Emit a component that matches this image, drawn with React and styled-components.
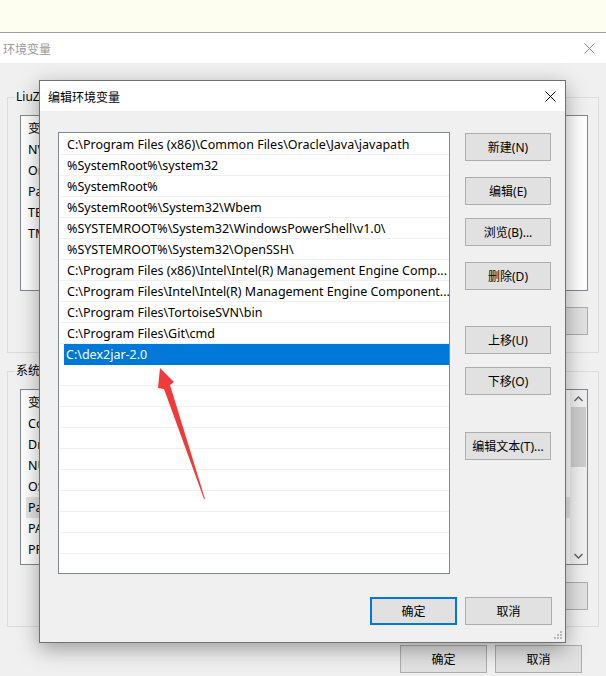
import styled, { createGlobalStyle } from "styled-components";

const GlobalStyle = createGlobalStyle`
  body {
    margin: 0;
    background: #f0f0f0;
    font-family: "Noto Sans", "Noto Sans CJK SC", sans-serif;
  }
`;

const Page = styled.div`
  position: relative;
  width: 606px;
  height: 676px;
  overflow: hidden;
  background: #f0f0f0;
`;

const TopStrip = styled.div`
  height: 32px;
  background: #fdfdf0;
  border-bottom: 1px solid #9d9d9d;
`;

const Window = styled.div`
  display: flex;
  flex-direction: column;
`;

const TitleBar = styled.div`
  height: 30px;
  display: flex;
  align-items: center;
  justify-content: space-between;
  background: #ffffff;
  padding: 0 11px 0 3px;
  font-size: 12px;
  color: ${(p) => (p.$active ? "#000000" : "#9a9a9a")};
  font-family: "Noto Sans CJK SC", sans-serif;
`;

const CloseIcon = ({ color }) => (
  <svg width="11" height="11" viewBox="0 0 11 11">
    <path d="M0.5 0.5 L10.5 10.5 M10.5 0.5 L0.5 10.5" stroke={color} strokeWidth="1" fill="none" />
  </svg>
);

const Body = styled.div`
  display: flex;
  flex-direction: column;
  padding: 0 7px 0 7px;
`;

const Group = styled.fieldset`
  margin: ${(p) => p.$top}px 0 0 0;
  padding: ${(p) => p.$padTop}px 10px ${(p) => p.$padBottom}px 12px;
  border: 1px solid #dcdcdc;
  display: flex;
  flex-direction: column;
  align-items: flex-end;
`;

const Legend = styled.legend`
  padding: 0 1px;
  margin-left: -5px;
  font-size: 12px;
  line-height: 16px;
  color: #000;
  font-family: "Noto Sans", "Noto Sans CJK SC", sans-serif;
`;

const VarList = styled.div`
  align-self: stretch;
  height: 176px;
  box-sizing: border-box;
  border: 1px solid #828790;
  background: #ffffff;
  display: flex;
  overflow: hidden;
`;

const VarRows = styled.div`
  flex: 1;
  padding-top: 2px;
  overflow: hidden;
`;

const VarRow = styled.div`
  height: 21px;
  line-height: 21px;
  font-size: 12.5px;
  padding-left: ${(p) => (p.$hover ? 2 : 7)}px;
  margin-left: ${(p) => (p.$hover ? 5 : 0)}px;
  background: ${(p) => (p.$hover ? "#e5e5e5" : "transparent")};
  white-space: nowrap;
`;

const ScrollBar = styled.div`
  width: 17px;
  background: #f0f0f0;
  display: flex;
  flex-direction: column;
`;

const ScrollArrow = styled.div`
  height: 17px;
  display: flex;
  align-items: center;
  justify-content: center;
`;

const ScrollThumb = styled.div`
  height: 60px;
  margin: 0 1px;
  background: #cdcdcd;
`;

const ScrollTrack = styled.div`
  flex: 1;
`;

const Chevron = ({ up }) => (
  <svg width="9" height="6" viewBox="0 0 9 6">
    <path
      d={up ? "M0.5 5 L4.5 1 L8.5 5" : "M0.5 1 L4.5 5 L8.5 1"}
      stroke="#606060"
      strokeWidth="1.4"
      fill="none"
    />
  </svg>
);

const Button = styled.button`
  width: ${(p) => p.$width || 86}px;
  height: 28px;
  margin-top: ${(p) => p.$top || 0}px;
  box-sizing: border-box;
  background: #e1e1e1;
  border: ${(p) => (p.$default ? "2px solid #0078d7" : "1px solid #adadad")};
  font-size: 12px;
  font-family: "Noto Sans", "Noto Sans CJK SC", sans-serif;
  color: #000;
  padding: 0;
  flex-shrink: 0;
`;

const Footer = styled.div`
  display: flex;
  justify-content: flex-end;
  gap: ${(p) => p.$gap}px;
  margin-top: ${(p) => p.$top}px;
  padding-right: ${(p) => p.$right}px;
`;

const Dialog = styled.div`
  position: absolute;
  left: 39px;
  top: 80px;
  width: 527px;
  height: 563px;
  box-sizing: border-box;
  border: 1px solid #707070;
  background: #f0f0f0;
  box-shadow: 0 6px 20px rgba(0, 0, 0, 0.35);
  display: flex;
  flex-direction: column;
`;

const DialogTitle = styled(TitleBar)`
  padding: 0 9px 0 8px;
`;

const DialogBody = styled.div`
  padding: 21px 0 0 18px;
  display: flex;
  flex-direction: column;
`;

const DialogRow = styled.div`
  display: flex;
  gap: 15px;
`;

const PathList = styled.div`
  width: 392px;
  height: 442px;
  box-sizing: border-box;
  border: 1px solid #828790;
  background: #ffffff;
  padding-top: 1px;
  overflow: hidden;
`;

const PathRow = styled.div`
  height: 21px;
  box-sizing: border-box;
  line-height: 21px;
  font-size: 12.5px;
  padding-left: ${(p) => (p.$selected ? 2 : 7)}px;
  margin-left: ${(p) => (p.$selected ? 5 : 1)}px;
  color: ${(p) => (p.$selected ? "#ffffff" : "#000000")};
  background: ${(p) => (p.$selected ? "#0078d7" : "transparent")};
  border-bottom: 1px solid ${(p) => (p.$selected ? "#0078d7" : "#f0f0f0")};
  white-space: nowrap;
  overflow: hidden;
`;

const ButtonColumn = styled.div`
  display: flex;
  flex-direction: column;
  padding-top: 1px;
`;

const Grip = styled.svg`
  position: absolute;
  right: 2px;
  bottom: 2px;
`;

const Arrow = styled.svg`
  position: absolute;
  left: 145px;
  top: 360px;
  pointer-events: none;
`;

const paths = [
  "C:\\Program Files (x86)\\Common Files\\Oracle\\Java\\javapath",
  "%SystemRoot%\\system32",
  "%SystemRoot%",
  "%SystemRoot%\\System32\\Wbem",
  "%SYSTEMROOT%\\System32\\WindowsPowerShell\\v1.0\\",
  "%SYSTEMROOT%\\System32\\OpenSSH\\",
  "C:\\Program Files (x86)\\Intel\\Intel(R) Management Engine Comp...",
  "C:\\Program Files\\Intel\\Intel(R) Management Engine Component...",
  "C:\\Program Files\\TortoiseSVN\\bin",
  "C:\\Program Files\\Git\\cmd",
  "C:\\dex2jar-2.0",
];

const userVars = ["变量", "NVM_HOME", "OneDrive", "Path", "TEMP", "TMP"];
const sysVars = ["变量", "ComSpec", "DriverData", "NUMBER_OF_PROCESSORS", "OS", "Path", "PATHEXT", "PROCESSOR_ARCHITECTURE"];

const sideButtons = [
  { label: "新建(N)", top: 0 },
  { label: "编辑(E)", top: 16 },
  { label: "浏览(B)...", top: 13 },
  { label: "删除(D)", top: 16 },
  { label: "上移(U)", top: 36 },
  { label: "下移(O)", top: 13 },
  { label: "编辑文本(T)...", top: 37 },
];

export default function App() {
  const empty = Array.from({ length: 10 });
  return (
    <Page>
      <GlobalStyle />
      <TopStrip />
      <Window>
        <TitleBar>
          <span>环境变量</span>
          <CloseIcon color="#8a8a8a" />
        </TitleBar>
        <Body>
          <Group $top={26} $padTop={10} $padBottom={17}>
            <Legend>LiuZhao 的用户变量(U)</Legend>
            <VarList>
              <VarRows>
                {userVars.map((v, i) => (
                  <VarRow key={i}>{v}</VarRow>
                ))}
              </VarRows>
            </VarList>
            <Button $top={16}>删除(D)</Button>
          </Group>
          <Group $top={10} $padTop={10} $padBottom={16}>
            <Legend>系统变量(S)</Legend>
            <VarList>
              <VarRows>
                {sysVars.map((v, i) => (
                  <VarRow key={i} $hover={v === "Path"}>
                    {v}
                  </VarRow>
                ))}
              </VarRows>
              <ScrollBar>
                <ScrollArrow>
                  <Chevron up />
                </ScrollArrow>
                <ScrollThumb />
                <ScrollTrack />
                <ScrollArrow>
                  <Chevron />
                </ScrollArrow>
              </ScrollBar>
            </VarList>
            <Button $top={17}>删除(L)</Button>
          </Group>
          <Footer $gap={8} $top={18} $right={17}>
            <Button $width={87}>确定</Button>
            <Button $width={87}>取消</Button>
          </Footer>
        </Body>
      </Window>

      <Dialog>
        <DialogTitle $active>
          <span>编辑环境变量</span>
          <CloseIcon color="#000000" />
        </DialogTitle>
        <DialogBody>
          <DialogRow>
            <PathList>
              {paths.map((p, i) => (
                <PathRow key={i} $selected={i === paths.length - 1}>
                  {p}
                </PathRow>
              ))}
              {empty.map((_, i) => (
                <PathRow key={"e" + i} />
              ))}
            </PathList>
            <ButtonColumn>
              {sideButtons.map((b) => (
                <Button key={b.label} $top={b.top}>
                  {b.label}
                </Button>
              ))}
            </ButtonColumn>
          </DialogRow>
          <Footer $gap={8} $top={23} $right={13}>
            <Button $default $width={87}>确定</Button>
            <Button $width={87}>取消</Button>
          </Footer>
        </DialogBody>
        <Grip width="10" height="10" viewBox="0 0 10 10">
          {[
            [7, 1],
            [4, 4],
            [7, 4],
            [1, 7],
            [4, 7],
            [7, 7],
          ].map(([x, y], i) => (
            <rect key={i} x={x} y={y} width="2" height="2" fill="#b8b8b8" />
          ))}
        </Grip>
      </Dialog>

      <Arrow width="70" height="145" viewBox="0 0 70 145">
        <polygon
          points="15,8 29,22 25,25 60,139 59,139 19,29 13,28"
          fill="#f23a3a"
        />
      </Arrow>
    </Page>
  );
}
